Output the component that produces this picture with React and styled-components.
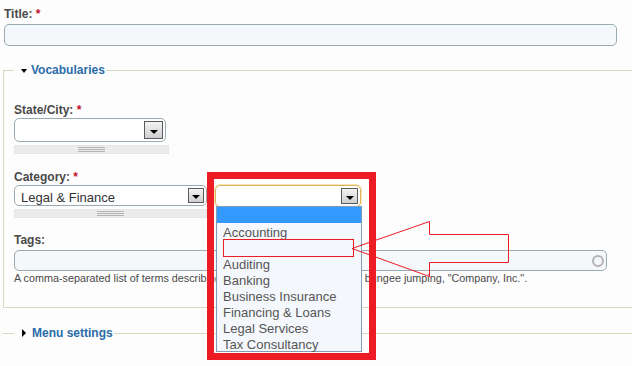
import React from "react";
import styled, { createGlobalStyle } from "styled-components";

const GlobalStyle = createGlobalStyle`
  html, body {
    margin: 0;
    padding: 0;
    background: #fdfdfd;
  }
  body {
    font-family: "Liberation Sans", Arial, sans-serif;
    color: #494949;
    overflow: hidden;
  }
`;

const Page = styled.div`
  position: relative;
  width: 632px;
  height: 366px;
  overflow: hidden;
  box-sizing: border-box;
  padding: 6px 0 0 4px;
`;

const FormItem = styled.div`
  margin-top: ${({ $mt }) => $mt || 0}px;
`;

const Label = styled.label`
  display: block;
  font-size: 12px;
  line-height: 16px;
  font-weight: bold;
  color: #494949;
`;

const Required = styled.span`
  color: #c0142b;
`;

const TextInput = styled.div`
  box-sizing: border-box;
  width: ${({ $width }) => $width}px;
  height: ${({ $height }) => $height}px;
  margin-top: ${({ $gap }) => $gap || 0}px;
  border: 1px solid #9aaab2;
  border-radius: 5px;
  background: #f4f8fb;
  display: flex;
  align-items: center;
  justify-content: flex-end;
  padding-right: 2px;
`;

const Throbber = styled.span`
  box-sizing: border-box;
  width: 12px;
  height: 12px;
  border: 2px solid #b2b2b2;
  border-radius: 50%;
`;

const Description = styled.div`
  font-size: 10.8px;
  line-height: 14px;
  color: #494949;
`;

const Fieldset = styled.fieldset`
  margin: ${({ $top }) => $top}px -40px 0 -1px;
  padding: 0 ${({ $collapsed }) => ($collapsed ? 11 : 10)}px
    ${({ $collapsed }) => ($collapsed ? 0 : 22)}px;
  border: solid #d8d8bd;
  border-width: ${({ $collapsed }) => ($collapsed ? "1px 0 0 0" : "1px")};
  min-width: 0;
`;

const Legend = styled.legend`
  padding: 0 1px 0 0;
  font-size: 12px;
  line-height: 16px;
`;

const LegendLink = styled.span`
  display: inline-flex;
  align-items: center;
  vertical-align: top;
  gap: ${({ $collapsed }) => ($collapsed ? 6 : 4)}px;
  padding-left: ${({ $collapsed }) => ($collapsed ? 8 : 7)}px;
  font-size: 12px;
  line-height: 16px;
  font-weight: bold;
  color: #2b6ca8;
`;

const Caret = styled.span`
  width: 0;
  height: 0;
  ${({ $collapsed }) =>
    $collapsed
      ? `border-top: 4px solid transparent;
         border-bottom: 4px solid transparent;
         border-left: 4px solid #000;`
      : `border-left: 3px solid transparent;
         border-right: 3px solid transparent;
         border-top: 4px solid #000;
         margin-top: 2px;`}
`;

const Select = styled.div`
  position: relative;
  box-sizing: border-box;
  width: ${({ $width }) => $width}px;
  height: ${({ $height }) => $height}px;
  border: 1px solid ${({ $focused }) => ($focused ? "#e2b256" : "#9aaab2")};
  box-shadow: ${({ $focused }) =>
    $focused ? "0 0 0 1px rgba(240, 205, 130, 0.55)" : "none"};
  border-radius: 5px;
  background: #fff;
  display: flex;
  align-items: center;
  justify-content: space-between;
  padding: 0 2px 0 6px;
  font-size: 13px;
  color: #333;
`;

const Value = styled.span`
  padding-top: 3px;
`;

const DropButton = styled.span`
  box-sizing: border-box;
  width: ${({ $size }) => $size + 1}px;
  height: ${({ $size }) => $size}px;
  margin-left: auto;
  border: 1px solid #5c5c5c;
  background: linear-gradient(#f3f3f3, #cfcfcf);
  display: flex;
  align-items: center;
  justify-content: center;

  &::after {
    content: "";
    margin-top: 3px;
    border-left: 4px solid transparent;
    border-right: 4px solid transparent;
    border-top: 4px solid #000;
  }
`;

const Grip = styled.div`
  box-sizing: border-box;
  width: ${({ $width }) => $width}px;
  height: 9px;
  margin-top: 3px;
  background: #ececec;
  border: 1px solid #e6e6e6;
  display: flex;
  align-items: center;
  justify-content: center;

  &::after {
    content: "";
    width: 27px;
    height: 5px;
    background: repeating-linear-gradient(#b4b4b4 0 1px, transparent 1px 2px);
  }
`;

const CategoryRow = styled.div`
  display: flex;
  align-items: flex-start;
  gap: 8px;
`;

const Column = styled.div`
  display: flex;
  flex-direction: column;
`;

const OptionList = styled.ul`
  position: absolute;
  top: 100%;
  left: 0;
  width: 146px;
  box-sizing: border-box;
  margin: 0;
  padding: 0;
  list-style: none;
  background: #f4f8fc;
  border: 1px solid #7f9db9;
  z-index: 2;
`;

const Option = styled.li`
  height: 14px;
  padding: 2px 0 0 6px;
  line-height: 16px;
  font-size: 13px;
  color: #555;
  white-space: nowrap;
  background: ${({ $active }) => ($active ? "#3399ff" : "transparent")};
`;

const Highlight = styled.div`
  position: absolute;
  left: 207px;
  top: 172px;
  width: 169px;
  height: 188px;
  box-sizing: border-box;
  border: 7px solid #ed1c24;
  z-index: 3;
`;

const Marker = styled.div`
  position: absolute;
  left: 223px;
  top: 239px;
  width: 131px;
  height: 18px;
  box-sizing: border-box;
  border: 1px solid #ed1c24;
  z-index: 3;
`;

const Arrow = styled.svg`
  position: absolute;
  left: 0;
  top: 0;
  z-index: 3;
`;

const options = [
  "",
  "Accounting",
  "",
  "Auditing",
  "Banking",
  "Business Insurance",
  "Financing & Loans",
  "Legal Services",
  "Tax Consultancy",
];

const App = () => {
  return (
    <Page>
      <GlobalStyle />
      <FormItem>
        <Label>
          Title: <Required>*</Required>
        </Label>
        <TextInput $width={613} $height={22} $gap={2} />
      </FormItem>

      <Fieldset $top={16}>
        <Legend>
          <LegendLink>
            <Caret />
            Vocabularies
          </LegendLink>
        </Legend>

        <FormItem $mt={24}>
          <Label>
            State/City: <Required>*</Required>
          </Label>
          <Select $width={152} $height={24}>
            <DropButton $size={18} />
          </Select>
          <Grip $width={155} />
        </FormItem>

        <FormItem $mt={15}>
          <Label>
            Category: <Required>*</Required>
          </Label>
          <CategoryRow>
            <Column>
              <Select $width={193} $height={21}>
                <Value>Legal &amp; Finance</Value>
                <DropButton $size={15} />
              </Select>
              <Grip $width={193} />
            </Column>
            <Select $width={146} $height={22} $focused>
              <DropButton $size={16} />
              <OptionList>
                {options.map((opt, i) => (
                  <Option key={i} $active={i === 0}>
                    {opt}
                  </Option>
                ))}
              </OptionList>
            </Select>
          </CategoryRow>
        </FormItem>

        <FormItem $mt={14}>
          <Label>Tags:</Label>
          <TextInput $width={593} $height={21} $gap={2}>
            <Throbber />
          </TextInput>
          <Description>
            A comma-separated list of terms describing this content. Example:
            funny, bungee jumping, "Company, Inc.".
          </Description>
        </FormItem>
      </Fieldset>

      <Fieldset $top={17} $collapsed>
        <Legend>
          <LegendLink $collapsed>
            <Caret $collapsed />
            Menu settings
          </LegendLink>
        </Legend>
      </Fieldset>

      <Highlight />
      <Marker />
      <Arrow width="632" height="366" viewBox="0 0 632 366">
        <polygon
          points="352,248.5 429.5,221.5 429.5,234.5 508.5,234.5 508.5,262.5 429.5,262.5 429.5,276.5"
          fill="none"
          stroke="#ed1c24"
          strokeWidth="1"
        />
      </Arrow>
    </Page>
  );
};

export default App;
